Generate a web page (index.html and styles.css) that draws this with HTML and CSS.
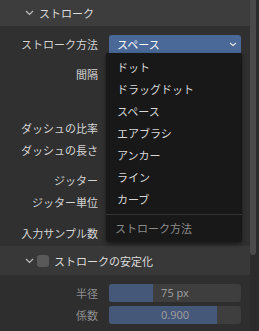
FILE: index.html
```html
<!DOCTYPE html>
<html>
	<head>
		<meta charset="utf-8">
		<title>ストローク</title>
		<link rel="stylesheet" href="styles.css">
	</head>
	<body>
		<div class="wrap">
			<div class="panel">
				<div class="head">
					<svg class="chev" width="9" height="6" viewBox="0 0 9 6"><path d="M1 1l3.5 3.5L8 1" fill="none" stroke="#bdbdbd" stroke-width="1.2"/></svg>
					<span>ストローク</span>
				</div>
				<div class="props">
					<div class="row r1">
						<label>ストローク方法</label>
						<div class="select">
							<span>スペース</span>
							<svg width="8" height="5" viewBox="0 0 8 5"><path d="M1 1l3 2.5L7 1" fill="none" stroke="#e6e6e6" stroke-width="1.2"/></svg>
						</div>
					</div>
					<div class="row r2"><label>間隔</label></div>
					<div class="row r3"><label>ダッシュの比率</label></div>
					<div class="row r4"><label>ダッシュの長さ</label></div>
					<div class="row r5"><label>ジッター</label></div>
					<div class="row r6"><label>ジッター単位</label></div>
					<div class="row r7"><label>入力サンプル数</label></div>

					<ul class="menu">
						<li>ドット</li>
						<li>ドラッグドット</li>
						<li>スペース</li>
						<li>エアブラシ</li>
						<li>アンカー</li>
						<li>ライン</li>
						<li>カーブ</li>
						<li class="title">ストローク方法</li>
					</ul>
				</div>
				<div class="subhead">
					<svg class="chev" width="9" height="6" viewBox="0 0 9 6"><path d="M1 1l3.5 3.5L8 1" fill="none" stroke="#bdbdbd" stroke-width="1.2"/></svg>
					<i class="check"></i>
					<span>ストロークの安定化</span>
				</div>
				<div class="sliders">
					<div class="row dim">
						<label>半径</label>
						<div class="slider"><b style="width:33%"></b><em>75 px</em></div>
					</div>
					<div class="row dim">
						<label>係数</label>
						<div class="slider"><b style="width:82%"></b><em>0.900</em></div>
					</div>
				</div>
			</div>
			<div class="scroll"><div class="thumb"></div></div>
		</div>
	</body>
</html>
```

FILE: styles.css
```css
body, ul{
	margin: 0;
	padding: 0;
}
body{
	background: #2e2e2e;
	font-family: "Noto Sans CJK JP", "Noto Sans", sans-serif;
	font-size: 11px;
	color: #d4d4d4;
}
.wrap{
	display: flex;
	height: 331px;
	overflow: hidden;
}
.panel{
	width: 250px;
	background: #303030;
}
.head{
	height: 26px;
	background: #3d3d3d;
	display: flex;
	align-items: center;
	padding-left: 25px;
	color: #dcdcdc;
}
.chev{
	margin-right: 5px;
}
.props{
	position: relative;
	padding-top: 9px;
	height: 209px;
}
.row{
	display: grid;
	grid-template-columns: 98px 132px;
	column-gap: 11px;
	height: 18px;
	align-items: center;
}
.row label{
	text-align: right;
	line-height: 18px;
	white-space: nowrap;
}
.r2{ margin-top: 12px; }
.r3{ margin-top: 36px; }
.r4{ margin-top: 4px; }
.r5{ margin-top: 12px; }
.r6{ margin-top: 4px; }
.r7{ margin-top: 13px; }
.select{
	height: 18px;
	background: #4a6898;
	border-radius: 3px 3px 0 0;
	display: flex;
	align-items: center;
	justify-content: space-between;
	padding: 0 4px 0 8px;
	color: #fff;
}
.menu{
	position: absolute;
	left: 106px;
	top: 27px;
	width: 136px;
	background: #181818;
	border-radius: 0 0 4px 4px;
	box-shadow: 0 2px 4px rgba(0,0,0,0.5);
	list-style: none;
	padding-top: 3px;
}
.menu li{
	height: 22px;
	line-height: 22px;
	padding-left: 11px;
	color: #d8d8d8;
}
.menu .title{
	border-top: 1px solid #333;
	margin-top: 4px;
	height: 27px;
	line-height: 27px;
	padding-left: 9px;
	color: #8c8c8c;
}
.subhead{
	margin-top: 2px;
	height: 29px;
	background: #383838;
	display: flex;
	align-items: center;
	padding-left: 25px;
	color: #dcdcdc;
}
.subhead .chev{
	margin-right: 3px;
}
.check{
	width: 12px;
	height: 12px;
	background: #595959;
	border-radius: 3px;
	margin-right: 5px;
}
.sliders{
	background: #2e2e2e;
	padding-top: 9px;
	height: 47px;
}
.sliders .row + .row{
	margin-top: 4px;
}
.dim label{
	color: #8e8e8e;
}
.slider{
	position: relative;
	height: 18px;
	background: #3e3e3e;
	border-radius: 3px;
	overflow: hidden;
	text-align: center;
	line-height: 18px;
	font-family: "Noto Sans", sans-serif;
	font-size: 11px;
	color: #9c9c9c;
}
.slider b{
	position: absolute;
	left: 0;
	top: 0;
	bottom: 0;
	background: #46587a;
}
.slider em{
	position: relative;
	font-style: normal;
}
.scroll{
	width: 9px;
	background: #2b2b2b;
}
.thumb{
	width: 6px;
	height: 255px;
	background: #4a4a4a;
	border-radius: 0 0 3px 3px;
}
```
